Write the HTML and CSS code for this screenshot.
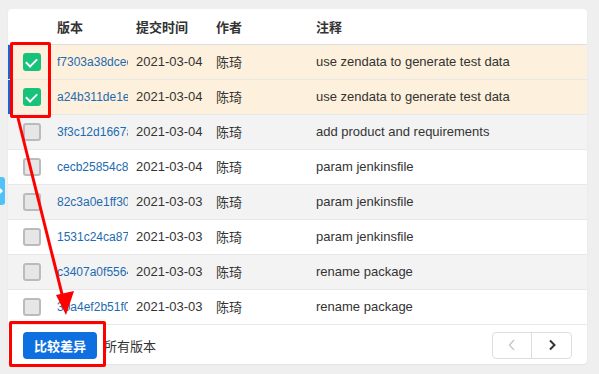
FILE: index.html
```html
<!DOCTYPE html>
<html lang="zh">

<head>
    <meta charset="UTF-8">
    <meta name="viewport" content="width=device-width, initial-scale=1.0">
    <title>版本</title>
    <link rel="stylesheet" href="styles.css">
</head>

<body>

    <div class="page">
        <div class="side-tab"><span class="side-arrow"></span></div>

        <div class="card">
            <table class="log">
                <thead>
                    <tr>
                        <th class="c-chk"></th>
                        <th class="c-ver">版本</th>
                        <th class="c-date">提交时间</th>
                        <th class="c-author">作者</th>
                        <th>注释</th>
                    </tr>
                </thead>
                <tbody>
                    <tr class="sel">
                        <td class="c-chk"><span class="chk on"></span></td>
                        <td class="c-ver"><a>f7303a38dcee</a></td>
                        <td>2021-03-04</td>
                        <td>陈琦</td>
                        <td>use zendata to generate test data</td>
                    </tr>
                    <tr class="sel">
                        <td class="c-chk"><span class="chk on"></span></td>
                        <td class="c-ver"><a>a24b311de1e6</a></td>
                        <td>2021-03-04</td>
                        <td>陈琦</td>
                        <td>use zendata to generate test data</td>
                    </tr>
                    <tr class="odd">
                        <td class="c-chk"><span class="chk"></span></td>
                        <td class="c-ver"><a>3f3c12d1667a</a></td>
                        <td>2021-03-04</td>
                        <td>陈琦</td>
                        <td>add product and requirements</td>
                    </tr>
                    <tr>
                        <td class="c-chk"><span class="chk"></span></td>
                        <td class="c-ver"><a>cecb25854c8</a></td>
                        <td>2021-03-04</td>
                        <td>陈琦</td>
                        <td>param jenkinsfile</td>
                    </tr>
                    <tr class="odd">
                        <td class="c-chk"><span class="chk"></span></td>
                        <td class="c-ver"><a>82c3a0e1ff30</a></td>
                        <td>2021-03-03</td>
                        <td>陈琦</td>
                        <td>param jenkinsfile</td>
                    </tr>
                    <tr>
                        <td class="c-chk"><span class="chk"></span></td>
                        <td class="c-ver"><a>1531c24ca87</a></td>
                        <td>2021-03-03</td>
                        <td>陈琦</td>
                        <td>param jenkinsfile</td>
                    </tr>
                    <tr class="odd">
                        <td class="c-chk"><span class="chk"></span></td>
                        <td class="c-ver"><a>c3407a0f5564</a></td>
                        <td>2021-03-03</td>
                        <td>陈琦</td>
                        <td>rename package</td>
                    </tr>
                    <tr>
                        <td class="c-chk"><span class="chk"></span></td>
                        <td class="c-ver"><a>30a4ef2b51f0</a></td>
                        <td>2021-03-03</td>
                        <td>陈琦</td>
                        <td>rename package</td>
                    </tr>
                </tbody>
            </table>

            <div class="foot">
                <button class="btn-diff">比较差异</button>
                <a class="all">所有版本</a>
                <div class="pager">
                    <span class="pg off"><svg width="8" height="12" viewBox="0 0 8 12"><path d="M6 1 L1.5 6 L6 11" fill="none" stroke="#ccc" stroke-width="1.6"/></svg></span>
                    <span class="pg"><svg width="8" height="12" viewBox="0 0 8 12"><path d="M2 1.5 L6.5 6 L2 10.5" fill="none" stroke="#333" stroke-width="2"/></svg></span>
                </div>
            </div>
        </div>

        <!-- annotations drawn over the screenshot -->
        <div class="mark mark-chk"></div>
        <div class="mark mark-btn"></div>
        <svg class="arrow" width="80" height="330" viewBox="0 0 80 330">
            <line x1="18" y1="118" x2="63" y2="298" stroke="#f00" stroke-width="3"/>
            <polygon points="56,295 74,291 66,315" fill="#f00"/>
        </svg>
    </div>

</body>

</html>
```

FILE: styles.css
```css
*{
    margin: 0;
    padding: 0;
    box-sizing: border-box;
}
body{
    width: 599px;
    height: 374px;
    background: #efefef;
    font-family: "Liberation Sans", Arial, "Noto Sans CJK SC", sans-serif;
    font-size: 13px;
    color: #333;
    overflow: hidden;
}
.page{
    position: relative;
    padding: 9px 12px 0 8px;
    height: 100%;
}
.card{
    background: #fff;
    border-radius: 4px;
    height: 355px;
    overflow: hidden;
    box-shadow: 0 1px 2px rgba(0,0,0,0.05);
}
.log{
    width: 100%;
    border-collapse: collapse;
    table-layout: fixed;
}
.log th{
    height: 35px;
    text-align: left;
    font-weight: bold;
    padding: 0 6px;
    border-bottom: 1px solid #ddd;
    vertical-align: middle;
}
.log td{
    height: 35px;
    padding: 0 6px;
    border-bottom: 1px solid #e8e8e8;
    white-space: nowrap;
    overflow: hidden;
    vertical-align: middle;
}
.log .c-chk{
    width: 43px;
    padding: 0 0 0 15px;
}
.log .c-ver{
    width: 79px;
    padding-right: 2px;
}
.log .c-date{
    width: 80px;
}
.log .c-author{
    width: 100px;
}
.log tr.odd td{
    background: #f3f3f3;
}
.log tr.sel td{
    background: #fdf0dc;
}
.log tr.sel td:first-child{
    box-shadow: inset 3px 0 0 #1565d8;
}
.c-ver a{
    color: #1d6bb0;
    font-size: 12px;
    display: block;
    width: 71px;
    overflow: hidden;
    text-overflow: clip;
}
.chk{
    display: block;
    width: 18px;
    height: 18px;
    border-radius: 3px;
    border: 2px solid #bbb;
    background: #e6e6e6;
    position: relative;
}
.chk.on{
    border: none;
    background: #17c27a;
}
.chk.on::after{
    content: "";
    position: absolute;
    left: 5px;
    top: 3px;
    width: 5px;
    height: 9px;
    border: solid #fff;
    border-width: 0 2.5px 2.5px 0;
    transform: rotate(45deg);
}
.foot{
    display: flex;
    align-items: center;
    height: 41px;
    padding: 0 15px 0 15px;
    gap: 7px;
}
.btn-diff{
    height: 27px;
    width: 74px;
    background: #0e6fe0;
    color: #fff;
    border: none;
    border-radius: 4px;
    font-family: inherit;
    font-size: 13px;
    font-weight: bold;
}
.all{
    color: #333;
}
.pager{
    margin-left: auto;
    display: flex;
    border: 1px solid #ddd;
    border-radius: 4px;
    height: 27px;
}
.pg{
    width: 39px;
    display: flex;
    align-items: center;
    justify-content: center;
}
.pg.off{
    border-right: 1px solid #ddd;
}
.side-tab{
    position: absolute;
    left: 0;
    top: 177px;
    width: 5px;
    height: 28px;
    background: #4fc3f7;
    border-radius: 0 3px 3px 0;
}
.side-arrow{
    position: absolute;
    left: 0;
    top: 11px;
    border-left: 3px solid #fff;
    border-top: 3px solid transparent;
    border-bottom: 3px solid transparent;
}
.mark{
    position: absolute;
    border: 3px solid #f00;
    border-radius: 2px;
}
.mark-chk{
    left: 10px;
    top: 42px;
    width: 41px;
    height: 76px;
}
.mark-btn{
    left: 9px;
    top: 321px;
    width: 97px;
    height: 46px;
}
.arrow{
    position: absolute;
    left: 0;
    top: 0;
}
```
